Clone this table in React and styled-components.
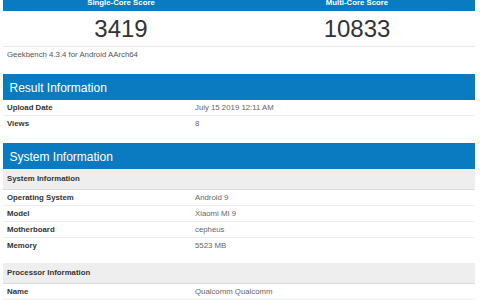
import React from 'react';
import styled, { createGlobalStyle } from 'styled-components';

const GlobalStyle = createGlobalStyle`
  html, body {
    margin: 0;
    padding: 0;
    background: #fff;
    font-family: "Liberation Sans", Arial, sans-serif;
    color: #333;
    overflow: hidden;
  }
`;

const Page = styled.div`
  width: 472px;
  margin: -5px 0 0 3px;
`;

const ScoreGrid = styled.div`
  display: grid;
  grid-template-columns: 1fr 1fr;
  border-bottom: 1px solid #eaeaea;
`;

const ScoreLabel = styled.div`
  background: #0a7bc1;
  color: #fff;
  font-weight: bold;
  font-size: 7.8px;
  line-height: 10px;
  padding: 3px 0;
  text-align: center;
`;

const ScoreValue = styled.div`
  font-size: 24px;
  line-height: 28px;
  padding: 4px 0 3px;
  text-align: center;
  color: #333;
`;

const Note = styled.div`
  font-size: 7.8px;
  line-height: 12px;
  color: #555;
  padding: 2px 4px 0;
  margin-bottom: 13px;
`;

const Section = styled.section`
  margin-bottom: 12px;
`;

const SectionTitle = styled.h2`
  margin: 0;
  background: #0a7bc1;
  color: #fff;
  font-weight: normal;
  font-size: 12px;
  line-height: 14px;
  padding: 7px 6.5px 5px;
`;

const Table = styled.div`
  margin-bottom: 10px;
  &:last-child {
    margin-bottom: 0;
  }
`;

const SubHeader = styled.div`
  background: #eeeeee;
  border-bottom: 1px solid #dcdcdc;
  font-weight: bold;
  font-size: 7.8px;
  line-height: 12px;
  padding: 4px 4px;
  color: #333;
`;

const Row = styled.div`
  display: grid;
  grid-template-columns: 188px 1fr;
  padding: 2px 4px 1px;
  font-size: 7.8px;
  line-height: 12px;
  border-bottom: 1px solid #eeeeee;
  &:last-child {
    border-bottom: ${(p) => (p.$keepLine ? '1px solid #eeeeee' : 'none')};
  }
`;

const Label = styled.div`
  font-weight: bold;
  color: #333;
`;

const Value = styled.div`
  color: #666;
`;

const InfoTable = ({ title, rows, keepLine }) => (
  <Table>
    {title && <SubHeader>{title}</SubHeader>}
    {rows.map(([k, v]) => (
      <Row key={k} $keepLine={keepLine}>
        <Label>{k}</Label>
        <Value>{v}</Value>
      </Row>
    ))}
  </Table>
);

const App = () => {
  return (
    <Page>
      <GlobalStyle />
      <ScoreGrid>
        <ScoreLabel>Single-Core Score</ScoreLabel>
        <ScoreLabel>Multi-Core Score</ScoreLabel>
        <ScoreValue>3419</ScoreValue>
        <ScoreValue>10833</ScoreValue>
      </ScoreGrid>
      <Note>Geekbench 4.3.4 for Android AArch64</Note>

      <Section>
        <SectionTitle>Result Information</SectionTitle>
        <InfoTable
          rows={[
            ['Upload Date', 'July 15 2019 12:11 AM'],
            ['Views', '8'],
          ]}
        />
      </Section>

      <Section>
        <SectionTitle>System Information</SectionTitle>
        <InfoTable
          title="System Information"
          rows={[
            ['Operating System', 'Android 9'],
            ['Model', 'Xiaomi MI 9'],
            ['Motherboard', 'cepheus'],
            ['Memory', '5523 MB'],
          ]}
        />
        <InfoTable
          title="Processor Information"
          keepLine
          rows={[['Name', 'Qualcomm Qualcomm']]}
        />
      </Section>
    </Page>
  );
};

export default App;
